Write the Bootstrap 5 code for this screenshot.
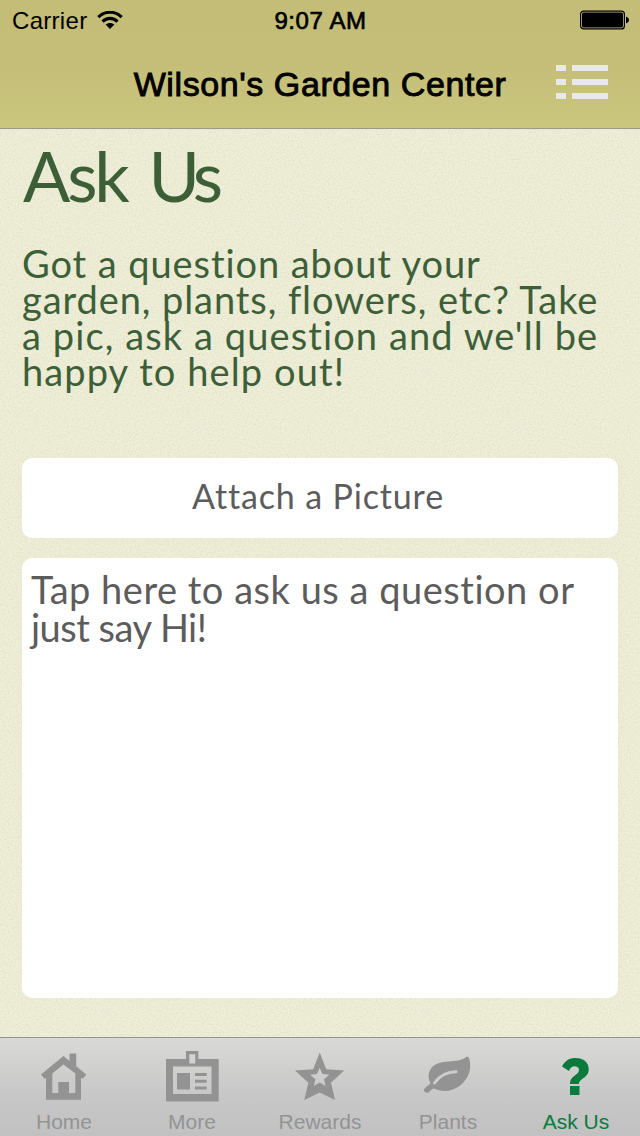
<!DOCTYPE html>
<html lang="en">
<head>
<meta charset="utf-8">
<meta name="viewport" content="width=device-width, initial-scale=1">
<title>Wilson's Garden Center</title>
<link href="https://cdn.jsdelivr.net/npm/bootstrap@5.3.0/dist/css/bootstrap.min.css" rel="stylesheet">
<style>
body{font-family:"Liberation Sans",Arial,sans-serif;color:#000;background:#ecebd5}
.screen{width:640px;height:1136px;overflow:hidden}
.topbar{height:129px;background:linear-gradient(#c4bd78,#c4be78 50%,#cbc67e);border-bottom:1px solid #9a9a86}
.statusbar{height:40px;padding:0 11px 0 12px;font-size:24px;line-height:42px}
.statusbar>*{flex:1 1 0}
.carrier{letter-spacing:.3px;padding-top:2px}
.clock{letter-spacing:.6px;-webkit-text-stroke:.7px #000}
.titlebar{height:88px;padding:0 32px}
.titlebar>*{flex:0 0 52px}
.titlebar h1{flex:1 1 auto;font-size:34px;line-height:88px;letter-spacing:.58px;-webkit-text-stroke:.9px #000;font-weight:400}
.titlebar svg{margin-top:-4px}
.paper{padding:10px 22px 0;background-color:#ecebd5;
 background-image:url("data:image/svg+xml,%3Csvg xmlns='http://www.w3.org/2000/svg' width='320' height='320'%3E%3Cfilter id='n' x='0' y='0' width='100%25' height='100%25'%3E%3CfeTurbulence type='fractalNoise' baseFrequency='.6' numOctaves='3' stitchTiles='stitch'/%3E%3CfeColorMatrix values='0 0 0 0 .52 0 0 0 0 .52 0 0 0 0 .33 1.5 0 0 0 -.58'/%3E%3C/filter%3E%3Crect width='320' height='320' fill='%23efeed8'/%3E%3Crect width='320' height='320' filter='url(%23n)' opacity='.38'/%3E%3C/svg%3E")}
.geo{font-family:Lato,sans-serif;font-weight:400}
.geo span{display:block;white-space:nowrap}
.headline{font-size:70px;line-height:72px;letter-spacing:-3.2px;word-spacing:7px;color:#3d5f38;margin-bottom:34px;padding-left:1px}
.headline b{font-weight:400;letter-spacing:-5.5px}
.intro{font-size:38px;line-height:36px;color:#3d5f38;margin-bottom:69px}
.sp-a{letter-spacing:.92px}
.sp-b{letter-spacing:1.1px}
.attach,.attach:hover{height:80px;border:0;border-radius:10px;background:#fff;color:#5c5c5c;font-size:34px;letter-spacing:.85px;line-height:1;padding:0 4px 4px 0;margin-bottom:20px}
.question{height:440px;border-radius:10px;background:#fff;color:#5c5c5c;font-size:38px;line-height:38px;letter-spacing:.52px;padding:12px 9px}
.question .tight{letter-spacing:-.5px}
.tabs{height:99px;border-top:1px solid #92978a;background:linear-gradient(#d9d9d7,#c7c7c7 60%,#c1c1c1);color:#939393;font-size:21px;line-height:24px;padding-top:10px}
.tabs a{color:inherit;text-decoration:none;width:128px}
.tabs a.current{color:#0b7a3d}
.tabs svg{display:block;width:56px;height:56px;margin-bottom:6px}
</style>
</head>
<body>
<div class="screen d-flex flex-column">
  <header class="topbar flex-shrink-0">
    <div class="statusbar d-flex">
      <div class="carrier d-flex align-items-center">Carrier
        <svg class="ms-2" width="30" height="20" viewBox="-2 1 30 20" fill="none" stroke="#000" stroke-width="3.200">
          <path d="M1.300 7.200C8 .6 18 .6 24.700 7.200M5.500 11.700C10 7.300 16 7.300 20.500 11.700"/>
          <path d="M13 19l-4.400-4.400C11 12.300 15 12.300 17.400 14.600z" fill="#000" stroke="none"/>
        </svg>
      </div>
      <div class="clock text-center">9:07 AM</div>
      <div class="d-flex justify-content-end align-items-center">
        <svg width="49" height="20" viewBox="0 -.5 49 20">
          <rect x=".6" y=".6" width="43.800" height="17.800" rx="3" fill="none" stroke="#000" stroke-width="1.200"/>
          <rect x="2" y="2" width="41" height="15" rx="1.500"/>
          <path d="M46 6c4 1.500 4 5.500 0 7z"/>
        </svg>
      </div>
    </div>
    <div class="titlebar d-flex align-items-center">
      <span></span>
      <h1 class="m-0 text-center">Wilson's Garden Center</h1>
      <svg width="52" height="34" viewBox="0 0 52 34" fill="#e9e9e9" shape-rendering="crispEdges">
        <path d="M0 0h10v6H0zM16 0h36v6H16zM0 14h10v6H0zM16 14h36v6H16zM0 28h10v6H0zM16 28h36v6H16z"/>
      </svg>
    </div>
  </header>

  <main class="paper flex-grow-1">
    <h2 class="geo headline mt-0">Ask <b>Us</b></h2>
    <p class="geo intro"><span class="sp-a">Got a question about your</span><span class="sp-a">garden, plants, flowers, etc? Take</span><span class="sp-b">a pic, ask a question and we'll be</span><span class="sp-b">happy to help out!</span></p>
    <button type="button" class="btn geo attach d-block w-100">Attach a Picture</button>
    <div class="geo question"><span>Tap here to ask us a question or</span><span class="tight">just say Hi!</span></div>
  </main>

  <nav class="tabs d-flex flex-shrink-0">
    <a href="#" class="d-flex flex-column align-items-center">
      <svg viewBox="36 1048 56 56" fill="currentColor"><path fill-rule="evenodd" d="M63.500 1056l6 5V1053.500h6.700v12.800l10.100 8.200-3.500 4.300-1.800-1v22H46v-22l-1.700 1-3.300-4.300zM63.500 1064.500L52.300 1073.500V1093h6v-11h10.700v11h6.300v-19.500z"/></svg>
      Home</a>
    <a href="#" class="d-flex flex-column align-items-center">
      <svg viewBox="164 1048 56 56" fill="currentColor"><path fill-rule="evenodd" d="M166 1059h20v-8h12.300v8h20.400v42.500H166zM189.300 1054.300v9.200h6v-9.200zM173 1066.500v27.500h38.500v-27.500zM177 1073h13v16.500h-13zM195 1073h11.700v3H195zM195 1079.700h11.700v3H195zM195 1086.400h11.700v3H195z"/></svg>
      More</a>
    <a href="#" class="d-flex flex-column align-items-center">
      <svg viewBox="292 1048 56 56" fill="currentColor"><path fill-rule="evenodd" d="M319.700 1052.500l6.500 16.800 18 1.200-13.200 12.300 4 17.200-15.300-7.500-15.400 7.500 4-17.200-13.300-12.300 18.200-1.200zM319.700 1067.800l-2.700 6.300-6.800.6 5.200 4.500-1.600 6.700 5.900-3.500 5.900 3.500-1.600-6.700 5.200-4.500-6.800-.6z"/></svg>
      Rewards</a>
    <a href="#" class="d-flex flex-column align-items-center">
      <svg viewBox="420 1048 56 56"><path fill="currentColor" d="M466 1057.300C467.500 1056.300 468.700 1057 469.200 1058.500C471 1065 470.500 1072 466.700 1078C462 1085.500 454 1091 445 1091C441 1091 437 1090 434 1088.500C432 1088.500 430.500 1091 428.500 1092.500C426.500 1093.500 423.500 1092 424 1089.500C424.500 1087.500 429 1085.500 430.500 1083C426.500 1076 429 1068 436 1064.200C444 1060 459 1063 466 1057.300Z"/><path d="M434.500 1083C439 1076 446 1072 456 1071.700" fill="none" stroke="#cdcdcc" stroke-width="3" stroke-linecap="round"/></svg>
      Plants</a>
    <a href="#" class="current d-flex flex-column align-items-center">
      <svg viewBox="548 1048 56 56" fill="currentColor"><path d="M562 1066.500C565 1060.500 569.500 1058 575.500 1058C583.500 1058 588.700 1062.500 588.700 1069C588.700 1078.500 579.300 1078 578.900 1084H570C569.600 1075.500 579 1075.500 579 1070C579 1067.500 577 1066.300 574.800 1066.300C572 1066.300 570 1068 569 1071zM570 1086h9.500v9H570z"/></svg>
      Ask Us</a>
  </nav>
</div>
<script src="https://cdn.jsdelivr.net/npm/bootstrap@5.3.0/dist/js/bootstrap.bundle.min.js"></script>
</body>
</html>
